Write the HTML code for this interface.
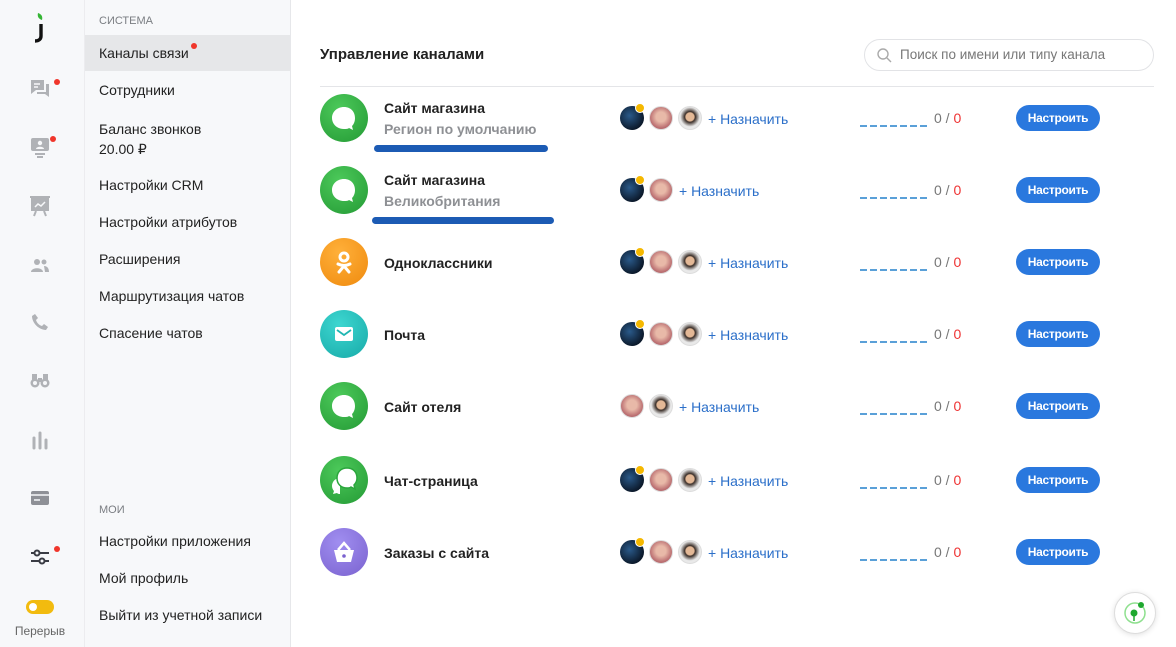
<!DOCTYPE html>
<html><head><meta charset="utf-8"><style>
*{margin:0;padding:0;box-sizing:border-box}
body{width:1176px;height:647px;overflow:hidden;font-family:"Liberation Sans",sans-serif;background:#fff;position:relative;color:#222}
.bar{position:absolute;left:0;top:0;width:85px;height:647px;background:#f7f8fa;border-right:1px solid #ececef}
.menu{position:absolute;left:85px;top:0;width:206px;height:647px;background:#f7f8fa;border-right:1px solid #e6e7ea}
.ic{position:absolute;left:28px;width:24px;height:24px}
.dot{position:absolute;width:6px;height:6px;border-radius:50%;background:#f0362b}
.mi{position:absolute;left:14px;font-size:14px;color:#222}
.cap{position:absolute;left:14px;font-size:11px;color:#7a7d82}
.a{position:absolute}
.sub{position:absolute;left:384px;font-size:14px;font-weight:bold;color:#8e9094}
.ci{position:absolute;left:320px;width:48px;height:48px;border-radius:50%}
.av{position:absolute;width:24px;height:24px;border-radius:50%}
.av1{background:radial-gradient(circle at 40% 40%,#2a5a8a,#0c1a2c 70%)}
.av2{background:radial-gradient(circle at 50% 45%,#e8b9a8 30%,#b86a6e 70%);border:1px solid #ddd}
.av3{background:radial-gradient(circle at 50% 45%,#e3b896 25%,#3a2e28 32%,#e9e9e9 60%);border:1px solid #ddd}
.yd{position:absolute;width:10px;height:10px;border-radius:50%;background:#f5b800;border:1px solid #fff}
.as{position:absolute;font-size:14px;color:#2b6fc9}
.dash{position:absolute;left:860px;width:68px;height:2px;background:repeating-linear-gradient(90deg,#5aa0d8 0 7px,transparent 7px 10px)}
.cnt{position:absolute;left:934px;font-size:14px;color:#777}
.cnt b{color:#e33;font-weight:normal}
.btn{position:absolute;left:1016px;width:84px;height:26px;border-radius:13px;background:#2a78de;color:#fff;font-size:12px;font-weight:bold;text-align:center;line-height:26px;letter-spacing:-.3px}
.ul{position:absolute;height:7px;border-radius:4px;background:#1c5bb4}
</style></head><body>
<div class="bar">
 <svg class="a" style="left:31px;top:12px" width="18" height="32" viewBox="0 0 18 32"><path d="M7 1c3 1 5 3 4 7-3-1-5-3-4-7z" fill="#35b535"/><path d="M10 12v12c0 3-2 5-6 5" stroke="#111" stroke-width="3.4" fill="none"/></svg>
 <svg class="ic" style="top:77px" viewBox="0 0 24 24"><path d="M3 3h13v10H8l-5 4z" fill="#b0b2b6"/><path d="M18 7h3v13l-4-3H9v-2h9z" fill="#b0b2b6"/><path d="M6 7h6M6 10h4" stroke="#f7f8fa" stroke-width="1.5"/></svg><div class="dot" style="left:54px;top:79px"></div>
 <svg class="ic" style="top:135px" viewBox="0 0 24 24"><rect x="3" y="3" width="18" height="13" rx="2" fill="#b0b2b6"/><circle cx="12" cy="8" r="2.2" fill="#f7f8fa"/><path d="M8 14c0-3 8-3 8 0z" fill="#f7f8fa"/><path d="M7 19h10M9 22h6" stroke="#b0b2b6" stroke-width="2"/></svg><div class="dot" style="left:50px;top:136px"></div>
 <svg class="ic" style="top:194px" viewBox="0 0 24 24"><rect x="3" y="4" width="18" height="13" fill="#b0b2b6"/><path d="M2 3h20" stroke="#b0b2b6" stroke-width="2"/><path d="M7 13l3-3 3 2 4-4" stroke="#f7f8fa" stroke-width="1.5" fill="none"/><path d="M8 17l-2 5M16 17l2 5" stroke="#b0b2b6" stroke-width="2"/></svg>
 <svg class="ic" style="top:254px" viewBox="0 0 24 24"><circle cx="9" cy="8" r="3" fill="#b0b2b6"/><circle cx="16" cy="8" r="2.5" fill="#b0b2b6"/><path d="M3 18c0-5 12-5 12 0zM16 12c3 0 5 2 5 6h-4" fill="#b0b2b6"/></svg>
 <svg class="ic" style="top:310px" viewBox="0 0 24 24"><path d="M7 4l3 4-2 2c1 3 3 5 6 6l2-2 4 3-2 3c-7 0-14-7-14-14z" fill="#b0b2b6"/></svg>
 <svg class="ic" style="top:368px" viewBox="0 0 24 24"><circle cx="7" cy="15" r="4.5" fill="#b0b2b6"/><circle cx="17" cy="15" r="4.5" fill="#b0b2b6"/><rect x="4" y="6" width="5" height="8" fill="#b0b2b6"/><rect x="15" y="6" width="5" height="8" fill="#b0b2b6"/><rect x="10" y="10" width="4" height="4" fill="#b0b2b6"/><circle cx="7" cy="15" r="2" fill="#f7f8fa"/><circle cx="17" cy="15" r="2" fill="#f7f8fa"/></svg>
 <svg class="ic" style="top:428px" viewBox="0 0 24 24"><path d="M6 10v10M12 5v15M18 12v8" stroke="#b0b2b6" stroke-width="3" stroke-linecap="round"/></svg>
 <svg class="ic" style="top:486px" viewBox="0 0 24 24"><rect x="3" y="5" width="18" height="14" rx="2" fill="#8e9096"/><path d="M3 9h18" stroke="#f7f8fa" stroke-width="1.5"/><path d="M6 14h6" stroke="#f7f8fa" stroke-width="1.5"/></svg>
 <svg class="ic" style="top:545px" viewBox="0 0 24 24"><path d="M3 8h18M3 16h18" stroke="#3a3c44" stroke-width="2"/><circle cx="9" cy="8" r="2.5" fill="#f7f8fa" stroke="#3a3c44" stroke-width="2"/><circle cx="14" cy="16" r="2.5" fill="#f7f8fa" stroke="#3a3c44" stroke-width="2"/></svg><div class="dot" style="left:54px;top:546px"></div>
 <div class="a" style="left:26px;top:600px;width:28px;height:14px;border-radius:7px;background:#f2bb0f"><div style="position:absolute;left:3px;top:3px;width:8px;height:8px;border-radius:50%;background:#fff"></div></div>
 <div class="a" style="left:0;width:80px;text-align:center;top:624px;font-size:12px;color:#666">Перерыв</div>
</div>
<div class="menu">
 <div class="cap" style="top:15px">СИСТЕМА</div>
 <div class="a" style="left:0;top:35px;width:205px;height:36px;background:#e6e7e9"></div>
 <div class="mi" style="top:45px">Каналы связи</div><div class="dot" style="left:106px;top:43px"></div>
 <div class="mi" style="top:82px">Сотрудники</div>
 <div class="mi" style="top:119px;line-height:20px">Баланс звонков<br>20.00 ₽</div>
 <div class="mi" style="top:177px">Настройки CRM</div>
 <div class="mi" style="top:214px">Настройки атрибутов</div>
 <div class="mi" style="top:251px">Расширения</div>
 <div class="mi" style="top:288px">Маршрутизация чатов</div>
 <div class="mi" style="top:325px">Спасение чатов</div>
 <div class="cap" style="top:504px">МОИ</div>
 <div class="mi" style="top:533px">Настройки приложения</div>
 <div class="mi" style="top:570px">Мой профиль</div>
 <div class="mi" style="top:607px">Выйти из учетной записи</div>
</div>
<div class="a" style="left:320px;top:46px;font-size:15px;font-weight:bold;color:#222">Управление каналами</div>
<div class="a" style="left:864px;top:39px;width:290px;height:32px;border:1px solid #e2e3e6;border-radius:16px"></div>
<svg class="a" style="left:876px;top:47px" width="16" height="16" viewBox="0 0 16 16"><circle cx="7" cy="7" r="5" stroke="#aaa" stroke-width="1.4" fill="none"/><path d="M11 11l4 4" stroke="#aaa" stroke-width="1.4"/></svg>
<div class="a" style="left:900px;top:47px;font-size:13.5px;color:#777">Поиск по имени или типу канала</div>
<div class="a" style="left:320px;top:86px;width:834px;height:1px;background:#e4e5e8"></div>

<svg width="0" height="0" style="position:absolute"><defs>
<g id="bub"><path d="M24 13c-7 0-12 5-12 11s5 11 12 11c2 0 4 0 5-1l4 2-1-4c2-2 3-5 3-8 0-6-4-11-11-11z" fill="#fff"/></g>
</defs></svg>

<!-- row1 -->
<div class="ci" style="top:94px;background:radial-gradient(circle at 40% 30%,#4cc95a,#249a35)"><svg width="48" height="48"><use href="#bub"/></svg></div>
<div class="a" style="left:384px;top:100px;font-size:14px;font-weight:bold">Сайт магазина</div>
<div class="sub" style="top:121px">Регион по умолчанию</div>
<div class="ul" style="left:374px;top:145px;width:174px"></div>
<div class="av av1" style="left:620px;top:106px"></div><div class="yd" style="left:635px;top:103px"></div>
<div class="av av2" style="left:649px;top:106px"></div><div class="av av3" style="left:678px;top:106px"></div>
<div class="as" style="left:708px;top:111px">+ Назначить</div>
<div class="dash" style="top:125px"></div><div class="cnt" style="top:110px">0 / <b>0</b></div>
<div class="btn" style="top:105px">Настроить</div>

<!-- row2 -->
<div class="ci" style="top:166px;background:radial-gradient(circle at 40% 30%,#4cc95a,#249a35)"><svg width="48" height="48"><use href="#bub"/></svg></div>
<div class="a" style="left:384px;top:172px;font-size:14px;font-weight:bold">Сайт магазина</div>
<div class="sub" style="top:193px">Великобритания</div>
<div class="ul" style="left:372px;top:217px;width:182px"></div>
<div class="av av1" style="left:620px;top:178px"></div><div class="yd" style="left:635px;top:175px"></div>
<div class="av av2" style="left:649px;top:178px"></div>
<div class="as" style="left:679px;top:183px">+ Назначить</div>
<div class="dash" style="top:197px"></div><div class="cnt" style="top:182px">0 / <b>0</b></div>
<div class="btn" style="top:177px">Настроить</div>

<!-- row3 -->
<div class="ci" style="top:238px;background:radial-gradient(circle at 40% 30%,#ffb03a,#ef8a0e)"><svg width="48" height="48" viewBox="0 0 48 48"><circle cx="24" cy="19" r="4" stroke="#fff" stroke-width="3" fill="none"/><path d="M18 26c4 2 8 2 12 0M24 28l-5 6M24 28l5 6" stroke="#fff" stroke-width="3" stroke-linecap="round" fill="none"/></svg></div>
<div class="a" style="left:384px;top:255px;font-size:14px;font-weight:bold">Одноклассники</div>
<div class="av av1" style="left:620px;top:250px"></div><div class="yd" style="left:635px;top:247px"></div>
<div class="av av2" style="left:649px;top:250px"></div><div class="av av3" style="left:678px;top:250px"></div>
<div class="as" style="left:708px;top:255px">+ Назначить</div>
<div class="dash" style="top:269px"></div><div class="cnt" style="top:254px">0 / <b>0</b></div>
<div class="btn" style="top:249px">Настроить</div>

<!-- row4 -->
<div class="ci" style="top:310px;background:radial-gradient(circle at 40% 30%,#3dd6d0,#17aaa8)"><svg width="48" height="48" viewBox="0 0 48 48"><rect x="15" y="17" width="18" height="14" rx="2" fill="#fff"/><path d="M17 20l7 5 7-5" stroke="#20b6b2" stroke-width="1.8" fill="none"/></svg></div>
<div class="a" style="left:384px;top:327px;font-size:14px;font-weight:bold">Почта</div>
<div class="av av1" style="left:620px;top:322px"></div><div class="yd" style="left:635px;top:319px"></div>
<div class="av av2" style="left:649px;top:322px"></div><div class="av av3" style="left:678px;top:322px"></div>
<div class="as" style="left:708px;top:327px">+ Назначить</div>
<div class="dash" style="top:341px"></div><div class="cnt" style="top:326px">0 / <b>0</b></div>
<div class="btn" style="top:321px">Настроить</div>

<!-- row5 -->
<div class="ci" style="top:382px;background:radial-gradient(circle at 40% 30%,#4cc95a,#249a35)"><svg width="48" height="48"><use href="#bub"/></svg></div>
<div class="a" style="left:384px;top:399px;font-size:14px;font-weight:bold">Сайт отеля</div>
<div class="av av2" style="left:620px;top:394px"></div><div class="av av3" style="left:649px;top:394px"></div>
<div class="as" style="left:679px;top:399px">+ Назначить</div>
<div class="dash" style="top:413px"></div><div class="cnt" style="top:398px">0 / <b>0</b></div>
<div class="btn" style="top:393px">Настроить</div>

<!-- row6 -->
<div class="ci" style="top:456px;background:radial-gradient(circle at 40% 30%,#4cc95a,#249a35)"><svg width="48" height="48" viewBox="0 0 48 48"><path d="M20 22c-5 0-8 4-8 8 0 2 1 4 2 5l-1 3 4-1c1 1 2 1 3 1" fill="#fff"/><path d="M27 12c-6 0-10 4-10 10s4 10 10 10c2 0 3 0 4-1l4 2-1-4c2-2 3-4 3-7 0-6-4-10-10-10z" fill="#fff" stroke="#2aa63c" stroke-width="1.5"/></svg></div>
<div class="a" style="left:384px;top:473px;font-size:14px;font-weight:bold">Чат-страница</div>
<div class="av av1" style="left:620px;top:468px"></div><div class="yd" style="left:635px;top:465px"></div>
<div class="av av2" style="left:649px;top:468px"></div><div class="av av3" style="left:678px;top:468px"></div>
<div class="as" style="left:708px;top:473px">+ Назначить</div>
<div class="dash" style="top:487px"></div><div class="cnt" style="top:472px">0 / <b>0</b></div>
<div class="btn" style="top:467px">Настроить</div>

<!-- row7 -->
<div class="ci" style="top:528px;background:radial-gradient(circle at 40% 30%,#a08ef0,#7a62cf)"><svg width="48" height="48" viewBox="0 0 48 48"><path d="M14 22h20l-3 12H17z" fill="#fff"/><path d="M18 22l6-7 6 7" stroke="#fff" stroke-width="2.5" fill="none"/><circle cx="24" cy="28" r="1.8" fill="#7a62cf"/></svg></div>
<div class="a" style="left:384px;top:545px;font-size:14px;font-weight:bold">Заказы с сайта</div>
<div class="av av1" style="left:620px;top:540px"></div><div class="yd" style="left:635px;top:537px"></div>
<div class="av av2" style="left:649px;top:540px"></div><div class="av av3" style="left:678px;top:540px"></div>
<div class="as" style="left:708px;top:545px">+ Назначить</div>
<div class="dash" style="top:559px"></div><div class="cnt" style="top:544px">0 / <b>0</b></div>
<div class="btn" style="top:539px">Настроить</div>

<div class="a" style="left:1114px;top:592px;width:42px;height:42px;border-radius:50%;background:#fff;border:1px solid #ddd;box-shadow:0 1px 6px rgba(0,0,0,.12)">
<svg width="40" height="40" viewBox="0 0 40 40"><circle cx="20" cy="20" r="10" stroke="#8fe08f" stroke-width="1.5" fill="none"/><circle cx="19" cy="20" r="3.5" fill="#1fa82f"/><path d="M19 22v6" stroke="#1fa82f" stroke-width="1.5"/><circle cx="26" cy="12" r="3" fill="#1fa82f"/></svg></div>
</body></html>
